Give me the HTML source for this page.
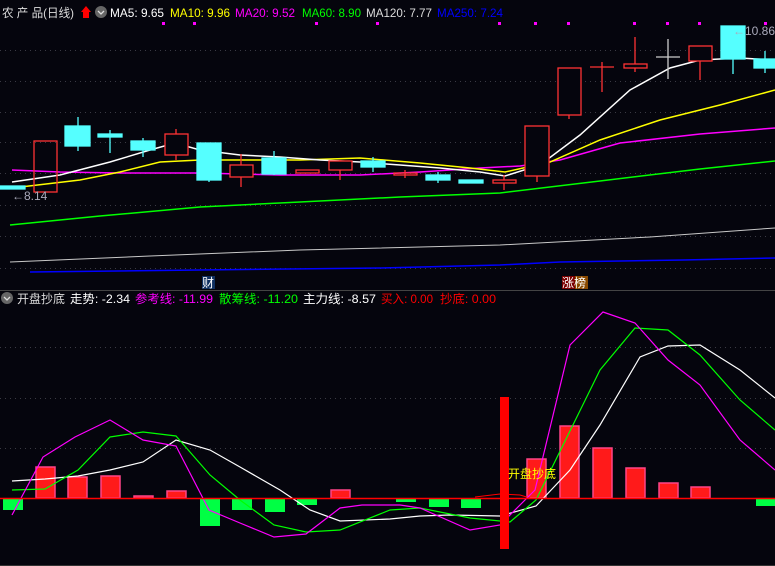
<!DOCTYPE html>
<html><head><meta charset="utf-8"><style>
html,body{margin:0;padding:0;background:#05050d;width:775px;height:566px;overflow:hidden}
svg{display:block}
text{font-family:"Liberation Sans","Noto Sans CJK SC",sans-serif;font-size:12px}
</style></head><body>
<svg width="775" height="566" viewBox="0 0 775 566">
<rect width="775" height="566" fill="#05050d"/>
<g stroke="#3a3a44" stroke-dasharray="1,4" stroke-width="1">
<line x1="0" y1="50.5" x2="775" y2="50.5"/><line x1="0" y1="81.5" x2="775" y2="81.5"/>
<line x1="0" y1="112.5" x2="775" y2="112.5"/><line x1="0" y1="142.5" x2="775" y2="142.5"/>
<line x1="0" y1="173.5" x2="775" y2="173.5"/><line x1="0" y1="205.5" x2="775" y2="205.5"/>
<line x1="0" y1="236.5" x2="775" y2="236.5"/><line x1="0" y1="268.5" x2="775" y2="268.5"/>
<line x1="0" y1="347.5" x2="775" y2="347.5"/><line x1="0" y1="398.5" x2="775" y2="398.5"/>
<line x1="0" y1="448.5" x2="775" y2="448.5"/>
</g>
<line x1="0" y1="290.5" x2="775" y2="290.5" stroke="#444" />
<line x1="0" y1="565.5" x2="775" y2="565.5" stroke="#333" />
<g fill="#ff00ff"><rect x="162" y="22" width="3" height="3"/><rect x="193" y="22" width="3" height="3"/><rect x="315" y="22" width="3" height="3"/><rect x="376" y="22" width="3" height="3"/><rect x="498" y="22" width="3" height="3"/><rect x="534" y="22" width="3" height="3"/><rect x="567" y="22" width="3" height="3"/><rect x="633" y="22" width="3" height="3"/><rect x="666" y="22" width="3" height="3"/><rect x="698" y="22" width="3" height="3"/><rect x="764" y="22" width="3" height="3"/></g>
<polyline fill="none" stroke="#0000ff" stroke-width="1.5" points="30,272 200,270 380,268 500,265 560,262 683,260 775,258"/>
<polyline fill="none" stroke="#c8c8c8" stroke-width="1" points="10,262 150,256 300,250 500,245 650,237 775,228"/>
<polyline fill="none" stroke="#00ff00" stroke-width="1.5" points="10,225 100,216 200,207 300,202 400,197 500,193 600,181 700,169 775,161"/>
<polyline fill="none" stroke="#ff00ff" stroke-width="1.5" points="12,170 60,172 120,173 200,173 280,175 360,175 420,172 480,168 520,166 560,160 620,143 700,134 775,128"/>
<polyline fill="none" stroke="#ffff00" stroke-width="1.5" points="12,188 80,180 120,172 160,162 200,160 260,160 300,160 360,158 420,163 470,168 505,172 550,162 600,140 660,120 720,105 775,90"/>
<polyline fill="none" stroke="#ffffff" stroke-width="1.5" points="12,182 60,175 110,162 150,150 175,143 200,150 240,155 280,157 320,160 360,162 400,165 440,168 480,172 505,176 540,165 580,135 630,90 670,68 700,60 740,58 775,60"/>
<g stroke="#ff3333" fill="none" stroke-width="1.3">
<rect x="34" y="141" width="23" height="51"/>
<line x1="176" y1="129" x2="176" y2="160"/><rect x="165" y="134" width="23" height="21" fill="#05050d"/>
<line x1="241" y1="154" x2="241" y2="187"/><rect x="230" y="165" width="23" height="12" fill="#05050d"/>
<rect x="296" y="170" width="23" height="3"/>
<line x1="340" y1="160" x2="340" y2="180"/><rect x="329" y="161" width="23" height="9" fill="#05050d"/>
<rect x="394" y="173" width="23" height="2"/><line x1="405" y1="170" x2="405" y2="178"/>
<line x1="504" y1="175" x2="504" y2="190"/><rect x="493" y="180" width="23" height="3" fill="#05050d"/>
<line x1="537" y1="170" x2="537" y2="182"/><rect x="525" y="126" width="24" height="50" fill="#05050d"/>
<line x1="569" y1="110" x2="569" y2="119"/><rect x="558" y="68" width="23" height="47" fill="#05050d"/>
<line x1="602" y1="62" x2="602" y2="92"/><line x1="590" y1="67" x2="614" y2="67"/>
<line x1="635" y1="37" x2="635" y2="72"/><rect x="624" y="64" width="23" height="4" fill="#05050d"/>
<line x1="700" y1="55" x2="700" y2="80"/><rect x="689" y="46" width="23" height="15" fill="#05050d"/>
</g>
<g stroke="#ccc" stroke-width="1.3"><line x1="668" y1="39" x2="668" y2="79"/><line x1="656" y1="57" x2="680" y2="57"/></g>
<g stroke="#55ffff" fill="#55ffff" stroke-width="1.3">
<line x1="78" y1="117" x2="78" y2="151"/><rect x="65" y="126" width="25" height="20"/>
<line x1="110" y1="130" x2="110" y2="153"/><rect x="98" y="134" width="24" height="3"/>
<line x1="143" y1="138" x2="143" y2="157"/><rect x="131" y="141" width="24" height="9"/>
<line x1="209" y1="143" x2="209" y2="182"/><rect x="197" y="143" width="24" height="37"/>
<line x1="274" y1="151" x2="274" y2="175"/><rect x="262" y="158" width="24" height="16"/>
<line x1="373" y1="157" x2="373" y2="172"/><rect x="361" y="161" width="24" height="6"/>
<line x1="438" y1="172" x2="438" y2="183"/><rect x="426" y="175" width="24" height="5"/>
<rect x="459" y="180" width="24" height="3"/>
<line x1="733" y1="59" x2="733" y2="74"/><rect x="721" y="26" width="24" height="33"/>
<line x1="765" y1="51" x2="765" y2="73"/><rect x="754" y="59" width="21" height="9"/>
<rect x="0" y="186" width="25" height="3"/>
</g>
<text x="12" y="200" fill="#aab" font-size="12">←8.14</text>
<text x="733" y="35" fill="#aab" font-size="12">←10.86</text>
<text x="2" y="17" fill="#ddd" textLength="72" lengthAdjust="spacingAndGlyphs">农 产 品(日线)</text>
<path d="M83 18 L83 12 L81 12 L86 6 L91 12 L89 12 L89 18Z" fill="#ff0000"/>
<circle cx="101" cy="12" r="6" fill="#666"/><path d="M98 11 L101 14 L104 11" stroke="#ddd" fill="none" stroke-width="1.3"/>
<text x="110" y="17" fill="#fff" textLength="54" lengthAdjust="spacingAndGlyphs">MA5: 9.65</text>
<text x="170" y="17" fill="#ffff00" textLength="60" lengthAdjust="spacingAndGlyphs">MA10: 9.96</text>
<text x="235" y="17" fill="#ff00ff" textLength="60" lengthAdjust="spacingAndGlyphs">MA20: 9.52</text>
<text x="302" y="17" fill="#00ff00" textLength="59" lengthAdjust="spacingAndGlyphs">MA60: 8.90</text>
<text x="366" y="17" fill="#ddd" textLength="66" lengthAdjust="spacingAndGlyphs">MA120: 7.77</text>
<text x="437" y="17" fill="#0000ff" textLength="66" lengthAdjust="spacingAndGlyphs">MA250: 7.24</text>
<rect x="202" y="276" width="13" height="13" fill="#0f3060"/>
<text x="202" y="287" fill="#fff" font-size="12">财</text>
<rect x="562" y="276" width="13" height="13" fill="#7a0000"/><rect x="575" y="276" width="13" height="13" fill="#8a4a00"/>
<text x="562" y="287" fill="#fff" font-size="12">涨榜</text>
<circle cx="7" cy="298" r="6" fill="#666"/><path d="M4 297 L7 300 L10 297" stroke="#ddd" fill="none" stroke-width="1.3"/>
<text x="17" y="303" fill="#ddd" textLength="48" lengthAdjust="spacingAndGlyphs">开盘抄底</text>
<text x="70" y="303" fill="#fff" textLength="60" lengthAdjust="spacingAndGlyphs">走势: -2.34</text>
<text x="135" y="303" fill="#ff00ff" textLength="78" lengthAdjust="spacingAndGlyphs">参考线: -11.99</text>
<text x="219" y="303" fill="#00ff00" textLength="79" lengthAdjust="spacingAndGlyphs">散筹线: -11.20</text>
<text x="303" y="303" fill="#fff" textLength="73" lengthAdjust="spacingAndGlyphs">主力线: -8.57</text>
<text x="381" y="303" fill="#ff0000" textLength="52" lengthAdjust="spacingAndGlyphs">买入: 0.00</text>
<text x="440" y="303" fill="#ff0000" textLength="56" lengthAdjust="spacingAndGlyphs">抄底: 0.00</text>
<g fill="#ff1a1a" stroke="#ff4488" stroke-width="1.5">
<rect x="36" y="467" width="19" height="31"/><rect x="68" y="477" width="19" height="21"/><rect x="101" y="476" width="19" height="22"/>
<rect x="134" y="496" width="19" height="2"/><rect x="167" y="491" width="19" height="7"/><rect x="331" y="490" width="19" height="8"/>
<rect x="527" y="459" width="19" height="39"/><rect x="560" y="426" width="19" height="72"/><rect x="593" y="448" width="19" height="50"/>
<rect x="626" y="468" width="19" height="30"/><rect x="659" y="483" width="19" height="15"/><rect x="691" y="487" width="19" height="11"/>
</g>
<g fill="#00ff44">
<rect x="3" y="498" width="20" height="12"/><rect x="200" y="498" width="20" height="28"/><rect x="232" y="498" width="20" height="12"/>
<rect x="265" y="498" width="20" height="14"/><rect x="297" y="498" width="20" height="7"/><rect x="396" y="498" width="20" height="4"/>
<rect x="429" y="498" width="20" height="9"/><rect x="461" y="498" width="20" height="10"/><rect x="756" y="498" width="19" height="8"/>
</g>
<polyline fill="none" stroke="#ff0000" stroke-width="1" points="475,497 500,494 520,495 530,498"/>
<polyline fill="none" stroke="#ffffff" stroke-width="1.2" points="12,481 45,479 78,476 110,470 143,462 176,440 210,450 240,467 280,490 310,510 340,521 390,519 420,516 450,515 500,516 536,506 570,470 600,425 640,357 668,346 700,345 740,370 775,398"/>
<polyline fill="none" stroke="#00ff00" stroke-width="1.2" points="12,490 45,489 78,470 110,437 143,432 176,436 210,475 240,500 274,525 306,532 340,530 390,510 420,508 470,518 510,522 536,500 600,370 635,328 668,330 700,355 740,400 775,430"/>
<polyline fill="none" stroke="#ff00ff" stroke-width="1.2" points="12,515 43,457 75,437 110,420 143,440 176,446 209,510 240,523 274,537 306,534 340,508 362,505 400,505 420,508 470,530 500,525 535,490 570,345 603,312 635,323 668,360 700,385 740,440 775,470"/>
<line x1="0" y1="498.5" x2="775" y2="498.5" stroke="#ff0000" stroke-width="1.5"/>
<rect x="500" y="397" width="9" height="152" fill="#ff0000"/>
<text x="508" y="478" fill="#ffff00" font-size="12">开盘抄底</text>
</svg>
</body></html>
